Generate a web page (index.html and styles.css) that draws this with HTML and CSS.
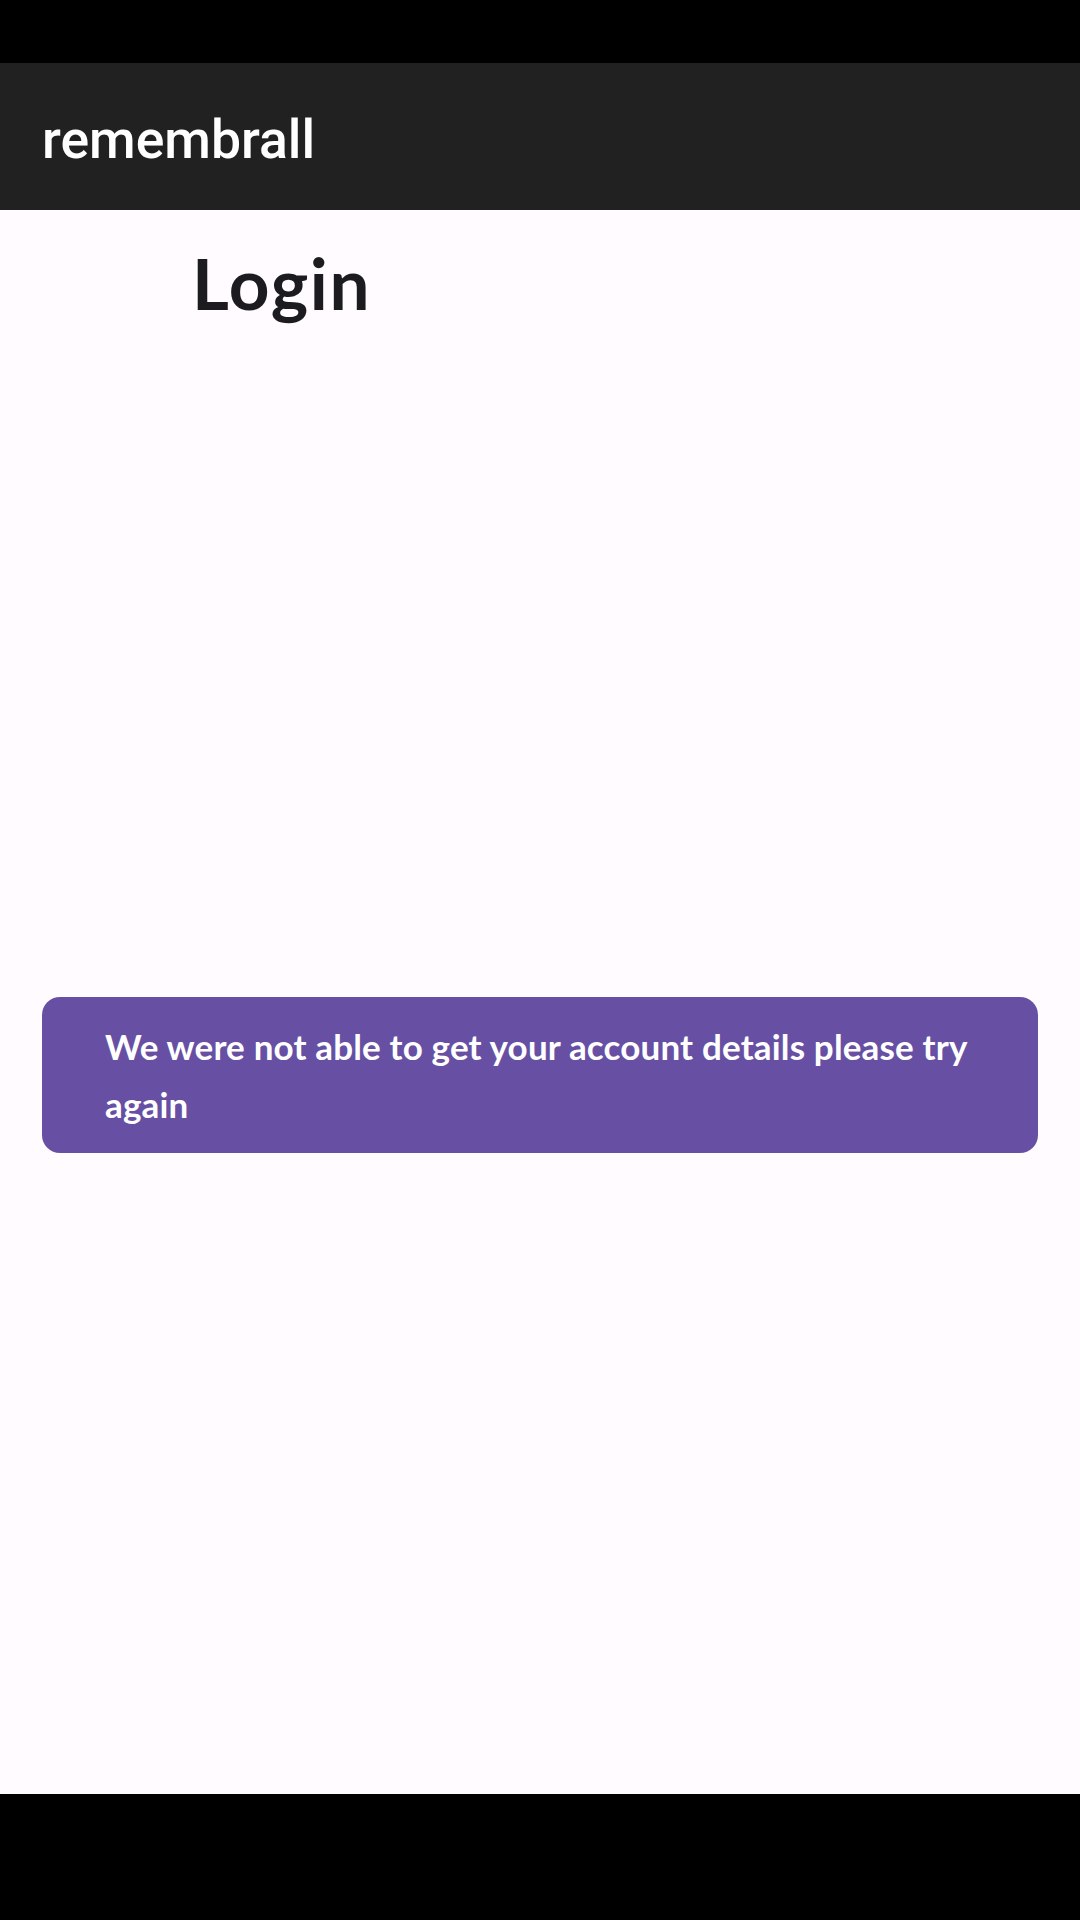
FILE: index.html
```html
<!DOCTYPE html>
<html lang="en">
<head>
<meta charset="utf-8">
<title>remembrall</title>
<link rel="stylesheet" href="styles.css">
</head>
<body>
<div class="screen">
  <div class="status-bar"></div>
  <header class="app-bar">
    <h1 class="app-title">remembrall</h1>
  </header>
  <main class="content">
    <h2 class="page-title">Login</h2>
    <div class="snackbar">
      <p class="snackbar-text">We were not able to get your account details please try again</p>
    </div>
  </main>
  <div class="nav-bar"></div>
</div>
</body>
</html>
```

FILE: styles.css
```css
* { box-sizing: border-box; }

html, body {
  margin: 0;
  padding: 0;
  background: #000;
}

.screen {
  width: 1080px;
  height: 1920px;
  display: flex;
  flex-direction: column;
}

.status-bar {
  height: 63px;
  background: #000;
  flex: none;
}

.app-bar {
  height: 147px;
  flex: none;
  background: #212121;
  display: flex;
  align-items: center;
  padding: 5px 0 0 42px;
}

.app-title {
  margin: 0;
  font-family: Roboto, "Liberation Sans", sans-serif;
  font-weight: 500;
  font-size: 53.5px;
  color: #ffffff;
  line-height: normal;
}

.content {
  flex: 1;
  background: #FFFBFE;
  position: relative;
}

.page-title {
  margin: 31px 0 0 192px;
  font-family: Lato, "Open Sans", sans-serif;
  font-weight: 700;
  font-size: 71px;
  letter-spacing: 1.6px;
  line-height: 84px;
  color: #1C1B1F;
}

.snackbar {
  position: absolute;
  left: 42px;
  right: 42px;
  top: 787px;
  background: #6750A4;
  border-radius: 18px;
  padding: 20px 40px 20px 63px;
}

.snackbar-text {
  margin: 0;
  font-family: Lato, "Open Sans", sans-serif;
  font-weight: 700;
  font-size: 35px;
  letter-spacing: 0.16px;
  line-height: 58px;
  color: #ffffff;
}

.nav-bar {
  height: 126px;
  flex: none;
  background: #000;
}
```
